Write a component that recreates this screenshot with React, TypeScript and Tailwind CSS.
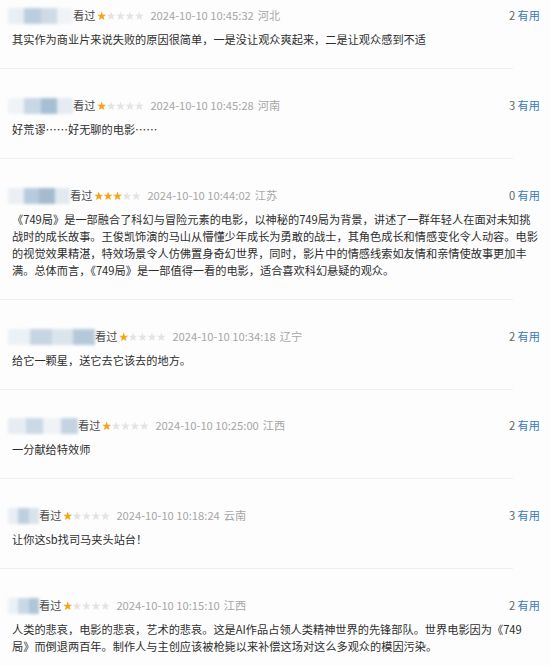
import React from "react";

type Item = {
  nameW: number;
  blur: string[];
  stars: number;
  time: string;
  region: string;
  useful: number;
  text: React.ReactNode;
};

const items: Item[] = [
  {
    nameW: 65,
    blur: ["#e6edf3", "#b6c9db", "#c9d7e4", "#eef2f6"],
    stars: 1,
    time: "2024-10-10 10:45:32",
    region: "河北",
    useful: 2,
    text: "其实作为商业片来说失败的原因很简单，一是没让观众爽起来，二是让观众感到不适",
  },
  {
    nameW: 65,
    blur: ["#eef2f6", "#c3d3e2", "#9fb8d0", "#e3eaf1"],
    stars: 1,
    time: "2024-10-10 10:45:28",
    region: "河南",
    useful: 3,
    text: "好荒谬……好无聊的电影……",
  },
  {
    nameW: 62,
    blur: ["#e8eef4", "#b1c6da", "#9db4ca", "#dfe7ef"],
    stars: 3,
    time: "2024-10-10 10:44:02",
    region: "江苏",
    useful: 0,
    text: "《749局》是一部融合了科幻与冒险元素的电影，以神秘的749局为背景，讲述了一群年轻人在面对未知挑战时的成长故事。王俊凯饰演的马山从懵懂少年成长为勇敢的战士，其角色成长和情感变化令人动容。电影的视觉效果精湛，特效场景令人仿佛置身奇幻世界，同时，影片中的情感线索如友情和亲情使故事更加丰满。总体而言，《749局》是一部值得一看的电影，适合喜欢科幻悬疑的观众。",
  },
  {
    nameW: 87,
    blur: ["#eaf0f5", "#c0d1e1", "#d7e2ec", "#aec3d7"],
    stars: 1,
    time: "2024-10-10 10:34:18",
    region: "辽宁",
    useful: 2,
    text: "给它一颗星，送它去它该去的地方。",
  },
  {
    nameW: 70,
    blur: ["#e4ebf2", "#c6d5e3", "#eef2f6", "#bfcfdf"],
    stars: 1,
    time: "2024-10-10 10:25:00",
    region: "江西",
    useful: 2,
    text: "一分献给特效师",
  },
  {
    nameW: 31,
    blur: ["#e6edf3", "#b9cbdc", "#d5e0ea"],
    stars: 1,
    time: "2024-10-10 10:18:24",
    region: "云南",
    useful: 3,
    text: "让你这sb找司马夹头站台！",
  },
  {
    nameW: 31,
    blur: ["#e9eff4", "#c4d4e3", "#a9bfd4"],
    stars: 1,
    time: "2024-10-10 10:15:10",
    region: "江西",
    useful: 2,
    text: (
      <>
        人类的悲哀，电影的悲哀，艺术的悲哀。这是AI作品占领人类精神世界的先锋部队。世界电影因为《749
        <br />
        局》而倒退两百年。制作人与主创应该被枪毙以来补偿这场对这么多观众的模因污染。
      </>
    ),
  },
];

const STAR = "5,0.3 6.2,3.6 9.7,3.7 6.95,5.85 7.95,9.3 5,7.3 2.05,9.3 3.05,5.85 0.3,3.7 3.8,3.6";

function Stars({ n }: { n: number }) {
  return (
    <svg width="47" height="10" viewBox="0 0 50 10" className="shrink-0">
      {[0, 1, 2, 3, 4].map((i) => (
        <polygon
          key={i}
          points={STAR}
          transform={`translate(${i * 10} 0)`}
          fill={i < n ? "#f5a417" : "#e4e4e4"}
        />
      ))}
    </svg>
  );
}

function NameBlur({ w, colors }: { w: number; colors: string[] }) {
  return (
    <div className="shrink-0 flex items-center pl-[8px]" style={{ width: w + 8 }}>
      <div className="flex h-[16px] w-full overflow-hidden blur-[1.5px] opacity-90">
        {colors.map((c, i) => (
          <div key={i} className="flex-1 h-full" style={{ backgroundColor: c }} />
        ))}
      </div>
    </div>
  );
}

export default function App() {
  return (
    <div
      className="w-[550px] h-[666px] overflow-hidden bg-[#fdfdfd] text-[11.2px]"
      style={{ fontFamily: '"Noto Sans CJK SC", "Noto Sans", sans-serif' }}
    >
      {items.map((it, idx) => (
        <div key={idx} className="flex flex-col">
          <div className={idx === 0 ? "pt-[7px]" : idx === 4 ? "pt-[27px]" : "pt-[28px]"}>
            <div className="flex items-center h-[17px] pr-[10px]">
              <NameBlur w={it.nameW} colors={it.blur} />
              <span className="text-[#4a4a4a] leading-[17px]">看过</span>
              <span className="ml-[2px] flex items-center">
                <Stars n={it.stars} />
              </span>
              <span className="ml-[6px] text-[#a6a6a6] leading-[17px]">{it.time}</span>
              <span className="ml-[4px] text-[#a6a6a6] leading-[17px]">{it.region}</span>
              <span className="ml-auto text-[#666] leading-[17px]">
                {it.useful} <span className="text-[#3a7ab8]">有用</span>
              </span>
            </div>
            <p className="mt-[7px] pl-[12px] w-[540px] text-[#2e2e2e] leading-[17px]">{it.text}</p>
          </div>
          <div className="mt-[20px] h-px w-[513px] bg-[#f0f0f0]" />
        </div>
      ))}
    </div>
  );
}
